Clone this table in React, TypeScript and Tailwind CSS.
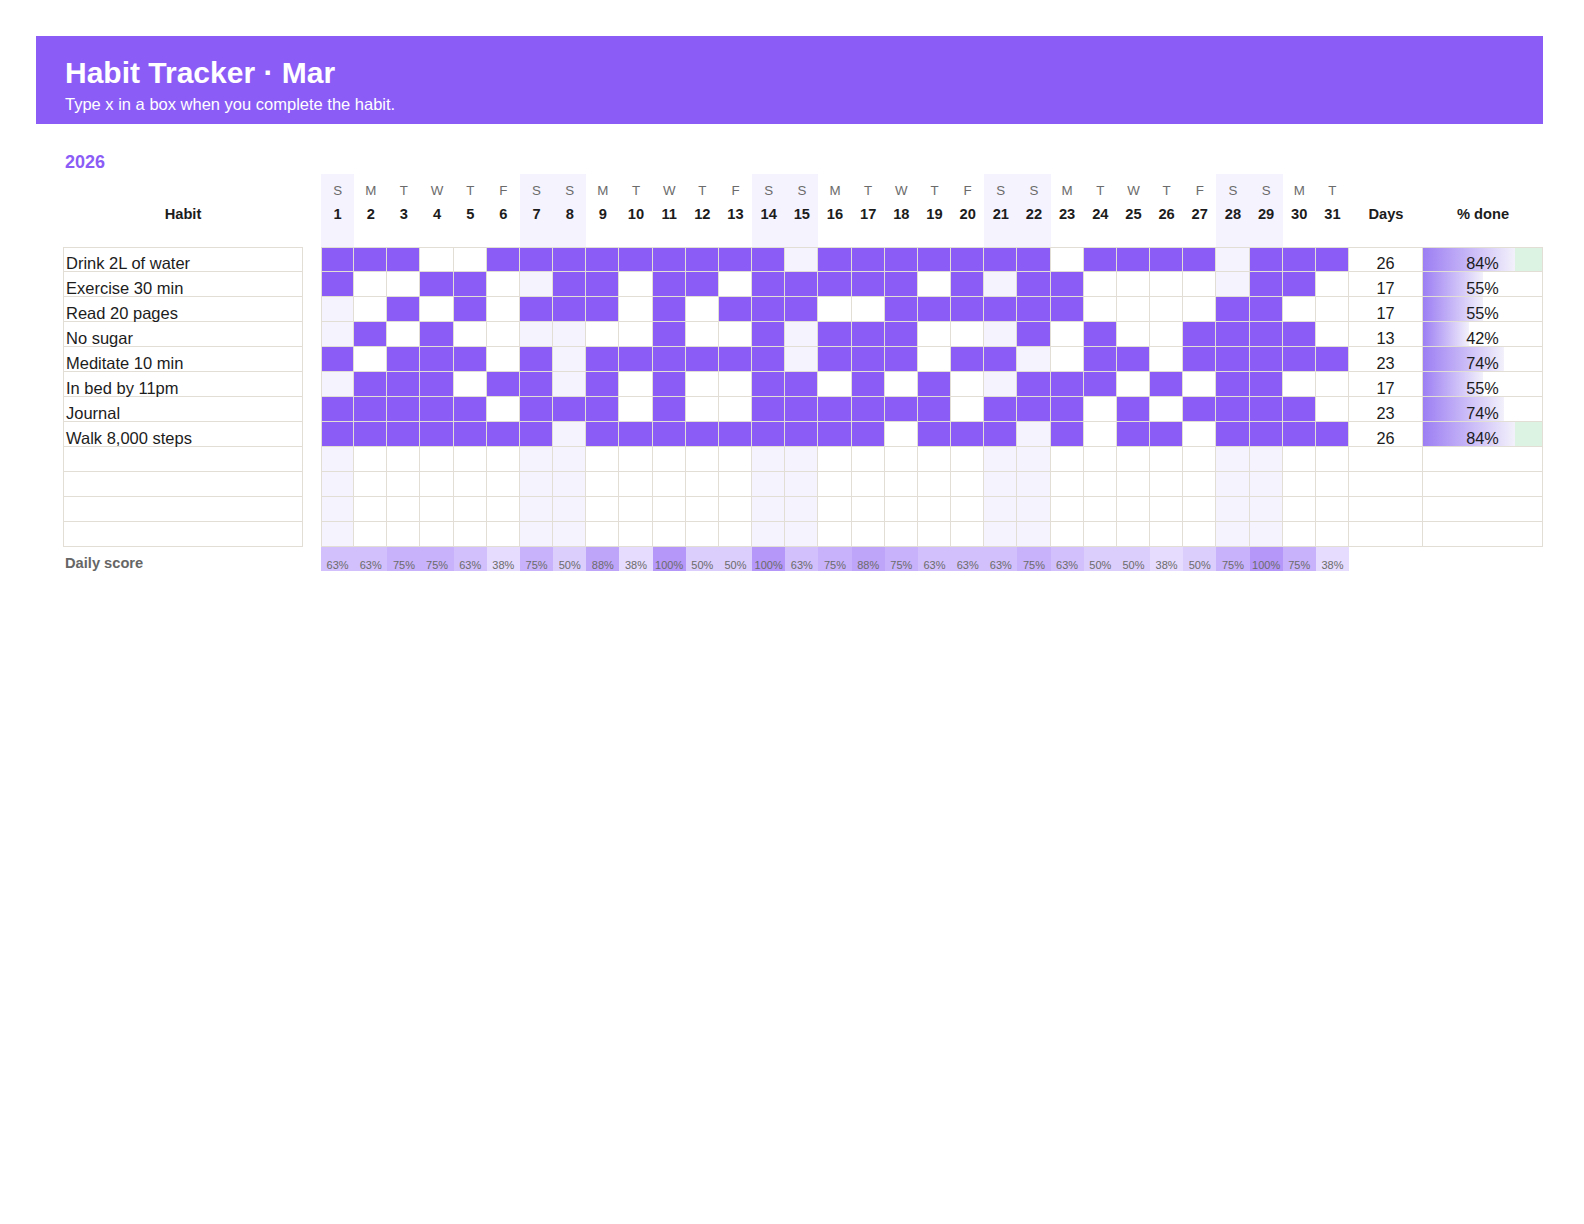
const FONT = "font-['Liberation_Sans',Arial,sans-serif]"

const WEEKDAYS = ['S', 'M', 'T', 'W', 'T', 'F', 'S']
const DAYS = Array.from({ length: 31 }, (_, i) => i + 1)
const isWeekend = (d: number) => d % 7 === 0 || d % 7 === 1

// 1 = done, read in groups of five days
const HABITS: { name: string; marks: string }[] = [
  { name: 'Drink 2L of water', marks: '11100 11111 11110 11111 11011 11011 1' },
  { name: 'Exercise 30 min',   marks: '10011 00110 11011 11101 01100 00011 0' },
  { name: 'Read 20 pages',     marks: '00101 01110 10111 00111 11100 00110 0' },
  { name: 'No sugar',          marks: '01010 00000 10010 11100 01010 01111 0' },
  { name: 'Meditate 10 min',   marks: '10111 01011 11110 11101 10011 01111 1' },
  { name: 'In bed by 11pm',    marks: '01110 11010 10011 01010 01110 10110 0' },
  { name: 'Journal',           marks: '11111 01110 10011 11110 11101 01111 0' },
  { name: 'Walk 8,000 steps',  marks: '11111 11011 11111 11011 10101 10111 1' },
]

const EMPTY_ROWS = 4

const rows = [
  ...HABITS.map((h) => ({ name: h.name, done: h.marks.replace(/ /g, '').split('').map((c) => c === '1') })),
  ...Array.from({ length: EMPTY_ROWS }, () => ({ name: '', done: DAYS.map(() => false) })),
]

const GRID = 'grid grid-cols-[240px_18px_repeat(31,minmax(0,1fr))_74px_120px] w-[1480px]'
const LINE = 'border-[#e3ded5]'

export default function App() {
  return (
    <div className={`${FONT} bg-white w-[1584px] h-[1224px] pt-9`}>
      {/* Banner */}
      <div className="ml-9 w-[1507px] h-[88px] bg-[#8b5cf6] pt-5 pl-[29px] text-white">
        <h1 className="text-[30px] leading-[34px] font-bold">Habit Tracker · Mar</h1>
        <p className="mt-[4px] text-[16.5px] leading-[20px]">Type x in a box when you complete the habit.</p>
      </div>

      <div className="ml-[63px]">
        <div className="mt-[27px] pl-[2px] text-[18px] leading-[22px] font-bold text-[#8b5cf6]">2026</div>

        {/* Column headers */}
        <div className={`${GRID} mt-[1px] h-[73px] text-[14.67px] font-bold text-[#1c1c1c]`}>
          <div className="pt-[31px] leading-[18px] text-center">Habit</div>
          <div />
          {DAYS.map((d) => (
            <div key={d} className={`flex flex-col items-center ${isWeekend(d) ? 'bg-[#f5f3fe]' : ''}`}>
              <span className="pt-[9px] text-[13.33px] leading-[16px] font-normal text-[#6b6b6b]">{WEEKDAYS[(d - 1) % 7]}</span>
              <span className="mt-[6px] leading-[18px]">{d}</span>
            </div>
          ))}
          <div className="pt-[31px] leading-[18px] text-center">Days</div>
          <div className="pt-[31px] leading-[18px] text-center">% done</div>
        </div>

        {/* Habit rows */}
        <div className={`${GRID} text-[#1c1c1c]`}>
          {rows.map((row, r) => {
            const first = r === 0
            const count = row.done.filter(Boolean).length
            const pct = Math.round((count / 31) * 100)
            const top = first ? 'border-t' : ''
            return [
              <div
                key={`n${r}`}
                className={`h-[25px] flex items-end pl-[2px] border-l border-r border-b ${top} ${LINE} text-[16.5px] leading-[16px] whitespace-nowrap`}
              >
                {row.name}
              </div>,
              <div key={`s${r}`} />,
              ...row.done.map((on, i) => {
                const d = i + 1
                const fill = on ? 'bg-[#8b5cf6]' : isWeekend(d) ? 'bg-[#f5f3fe]' : 'bg-white'
                return (
                  <div
                    key={`${r}-${d}`}
                    className={`h-[25px] border-r border-b ${top} ${d === 1 ? 'border-l' : ''} ${LINE} ${fill}`}
                  />
                )
              }),
              <div
                key={`d${r}`}
                className={`h-[25px] flex items-end justify-center border-r border-b ${top} ${LINE} text-[16.3px] leading-[16px]`}
              >
                {row.name ? count : ''}
              </div>,
              <div
                key={`p${r}`}
                className={`h-[25px] flex items-end justify-center border-r border-b ${top} ${LINE} text-[16.3px] leading-[16px] ${
                  row.name && pct >= 80 ? 'bg-[#dcf3e4]' : 'bg-white'
                }`}
                style={
                  row.name
                    ? {
                        backgroundImage: 'linear-gradient(90deg, #9c7ef3, #f3f1fb)',
                        backgroundSize: `${pct * 1.095}px 100%`,
                        backgroundRepeat: 'no-repeat',
                      }
                    : undefined
                }
              >
                {row.name ? `${pct}%` : ''}
              </div>,
            ]
          })}
        </div>

        {/* Daily score */}
        <div className={`${GRID} h-[24px]`}>
          <div className="flex items-end pl-[2px] text-[14.67px] leading-[16px] font-bold text-[#666666]">Daily score</div>
          <div />
          {DAYS.map((d) => {
            const n = HABITS.reduce((acc, h) => acc + (h.marks.replace(/ /g, '')[d - 1] === '1' ? 1 : 0), 0)
            const p = n / HABITS.length
            return (
              <div
                key={d}
                className="flex items-end justify-center text-[11px] leading-[11px] text-[#6b6b6b]"
                style={{ backgroundColor: `rgba(139, 92, 246, ${(0.685 * p - 0.045).toFixed(3)})` }}
              >
                {Math.round(p * 100)}%
              </div>
            )
          })}
          <div />
          <div />
        </div>
      </div>
    </div>
  )
}
